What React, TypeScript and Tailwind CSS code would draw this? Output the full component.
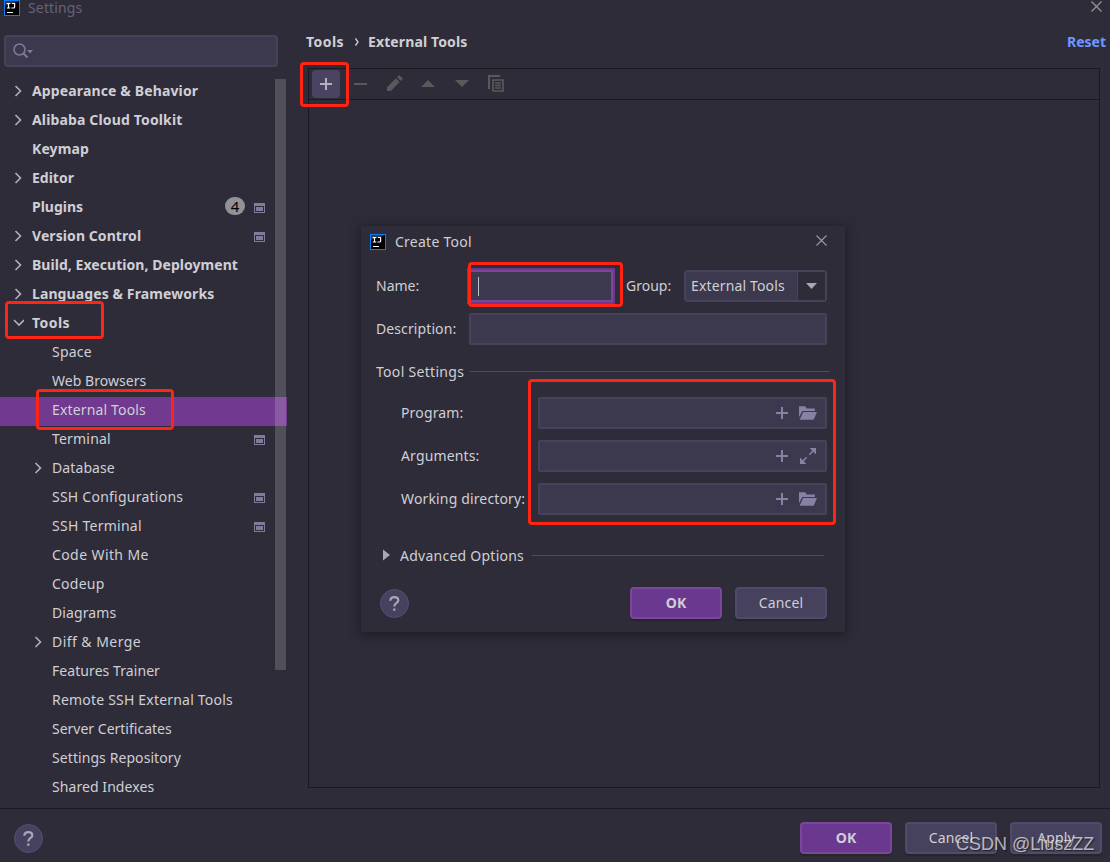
import clsx from 'clsx';
import type { ReactNode } from 'react';

type TreeItem = {
  label: string;
  depth: 0 | 1;
  arrow?: 'right' | 'down';
  badge?: number;
  project?: boolean;
  selected?: boolean;
  tracking?: string;
};

const items: TreeItem[] = [
  { label: 'Appearance & Behavior', depth: 0, arrow: 'right', tracking: 'tracking-[0.14px]' },
  { label: 'Alibaba Cloud Toolkit', depth: 0, arrow: 'right', tracking: 'tracking-[0.15px]' },
  { label: 'Keymap', depth: 0, tracking: 'tracking-[0.1px]' },
  { label: 'Editor', depth: 0, arrow: 'right' },
  { label: 'Plugins', depth: 0, badge: 4, project: true },
  { label: 'Version Control', depth: 0, arrow: 'right', project: true, tracking: 'tracking-[0.08px]' },
  { label: 'Build, Execution, Deployment', depth: 0, arrow: 'right', tracking: 'tracking-[0.05px]' },
  { label: 'Languages & Frameworks', depth: 0, arrow: 'right', tracking: 'tracking-[0.1px]' },
  { label: 'Tools', depth: 0, arrow: 'down', tracking: 'tracking-[0.45px]' },
  { label: 'Space', depth: 1, tracking: 'tracking-[0.2px]' },
  { label: 'Web Browsers', depth: 1, tracking: 'tracking-[0.05px]' },
  { label: 'External Tools', depth: 1, selected: true, tracking: 'tracking-[0.16px]' },
  { label: 'Terminal', depth: 1, project: true, tracking: 'tracking-[0.2px]' },
  { label: 'Database', depth: 1, arrow: 'right', tracking: 'tracking-[0.1px]' },
  { label: 'SSH Configurations', depth: 1, project: true, tracking: 'tracking-[0.24px]' },
  { label: 'SSH Terminal', depth: 1, project: true, tracking: 'tracking-[0.26px]' },
  { label: 'Code With Me', depth: 1, tracking: 'tracking-[0.4px]' },
  { label: 'Codeup', depth: 1, tracking: 'tracking-[0.25px]' },
  { label: 'Diagrams', depth: 1, tracking: 'tracking-[0.1px]' },
  { label: 'Diff & Merge', depth: 1, arrow: 'right', tracking: 'tracking-[0.45px]' },
  { label: 'Features Trainer', depth: 1, tracking: 'tracking-[0.07px]' },
  { label: 'Remote SSH External Tools', depth: 1, tracking: 'tracking-[0.2px]' },
  { label: 'Server Certificates', depth: 1 },
  { label: 'Settings Repository', depth: 1, tracking: 'tracking-[0.08px]' },
  { label: 'Shared Indexes', depth: 1, tracking: 'tracking-[0.07px]' },
];

/* ---------- Icons ---------- */
function AppIcon() {
  return (
    <svg className="w-4 h-4 shrink-0" viewBox="0 0 16 16">
      <rect x="0.5" y="0.5" width="15" height="15" fill="#000" stroke="#087cfa" />
      <path d="M1 1h14L1 6z" fill="#3a3a3c" />
      <path d="M2.700 3.500h3.600M2.700 8h3.600M4.500 3.500V8M8 3.500h2.600V7q0 1-1 1H7.500" fill="none" stroke="#fff" strokeWidth="1.200" />
      <path d="M3 12.500h6" stroke="#fff" />
    </svg>
  );
}

function CloseIcon() {
  return (
    <svg className="w-[11px] h-[11px]" viewBox="0 0 11 11">
      <path d="M.5.5l10 10M10.500.5l-10 10" stroke="#9b9a9f" strokeWidth="1.1" />
    </svg>
  );
}

function TreeArrow({ dir }: { dir?: 'right' | 'down' }) {
  return (
    <svg className="w-3 h-3 shrink-0" viewBox="0 0 12 12" fill="none" stroke="#b3b2b8" strokeWidth="1.6">
      {dir === 'right' && <path d="M3.500 1l5 5-5 5" />}
      {dir === 'down' && <path d="M2 3l5 5 5-5" />}
    </svg>
  );
}

function ProjectIcon() {
  return (
    <svg className="block w-[11px] h-[10px]" viewBox="0 0 11 10">
      <path d="M0 0h11v10H0zM1 3v6h9V3z" fill="#807a9b" fillRule="evenodd" />
      <rect x="2" y="4" width="7" height="4" fill="#807a9b" />
    </svg>
  );
}

function PlusIcon() {
  return (
    <svg className="w-3 h-3" viewBox="0 0 12 12">
      <path d="M5 0h2v5h5v2H7v5H5V7H0V5h5z" fill="currentColor" />
    </svg>
  );
}

function FolderIcon() {
  return (
    <svg className="w-[19px] h-[14px]" viewBox="0 0 19 14">
      <path d="M0 0h6.500l1.500 2.300h8.700V5H3.500L0 11.500z" fill="#8781a3" />
      <path d="M4.300 6H19l-3.500 8H.7z" fill="#8781a3" />
    </svg>
  );
}

function ExpandIcon() {
  return (
    <svg className="w-4 h-4" viewBox="0 0 16 16" fill="#8781a3" stroke="#8781a3">
      <path d="M9.500 0H16v6.500z" stroke="none" />
      <path d="M0 9.500V16h6.500z" stroke="none" />
      <path d="M13.500 2.500L9.300 6.700M2.500 13.500l4.200-4.200" strokeWidth="1.600" />
    </svg>
  );
}

/* ---------- Controls ---------- */
function HelpButton() {
  return (
    <button className="flex w-[29px] h-[29px] items-center justify-center rounded-full border border-[#544f73] bg-[#46415e]">
      <svg className="w-[11px] h-[15px]" viewBox="0 0 11 15" fill="none" stroke="#aaa7b8" strokeWidth="2.200">
        <path d="M1.300 4.800Q1.300 1.200 5.300 1.200T9.300 4.400C9.300 7 5.300 7 5.300 10.500" />
        <path d="M5.300 12.500v2.300" />
      </svg>
    </button>
  );
}

function Button({ children, primary }: { children: ReactNode; primary?: boolean }) {
  return (
    <button
      className={clsx(
        'w-[92px] h-8 rounded border-2 text-[14px] shadow-[0_2px_1px_#26252c]',
        primary ? 'border-[#7a479a] bg-[#6b388f] font-bold' : 'border-[#4f4b6b] bg-[#46415c] tracking-[0.15px]',
      )}
    >
      {children}
    </button>
  );
}

function PathField({ label, icon }: { label: string; icon: ReactNode }) {
  return (
    <div className="flex h-8 items-center">
      <span className="w-[137px] whitespace-nowrap pb-px">{label}</span>
      <div className="flex h-8 w-[289px] items-center justify-end gap-[11px] rounded-xs border-2 border-[#454259] bg-[#3c384d] pr-[7px] text-[#8781a3]">
        <PlusIcon />
        <span className="flex w-[19px] justify-center pr-px">{icon}</span>
      </div>
    </div>
  );
}

function Mark({ className }: { className: string }) {
  return <div className={clsx('pointer-events-none absolute rounded border-3 border-[#ff2414]', className)} />;
}

/* ---------- Sidebar ---------- */
function TreeRow({ item }: { item: TreeItem }) {
  return (
    <div
      className={clsx(
        'flex h-[29px] items-center pb-1 pr-[22px]',
        item.depth === 0 ? 'pl-3 font-bold' : 'pl-8',
        item.selected && 'bg-[#71398f]',
      )}
    >
      <TreeArrow dir={item.arrow} />
      <span className={clsx('ml-2 flex-1 whitespace-nowrap', item.tracking)}>{item.label}</span>
      {item.badge && (
        <span className="mb-[2px] mr-[9px] flex h-[18px] w-5 items-center justify-center rounded-full bg-[#919197] text-[15px] font-normal text-black">
          {item.badge}
        </span>
      )}
      {item.project && <span className="pt-[2px]"><ProjectIcon /></span>}
    </div>
  );
}

function Sidebar() {
  return (
    <aside className="relative w-[287px] shrink-0">
      <div className="flex h-4 items-center gap-2 pl-1 text-[#676279]">
        <AppIcon />
        <span className="text-[14px] leading-4 tracking-[0.15px]">Settings</span>
      </div>
      <div className="ml-1 mt-[19px] flex h-8 w-[274px] items-center rounded border-2 border-[#454259] bg-[#3c384d] pl-[7px]">
        <svg className="h-4 w-5" viewBox="0 0 20 16" fill="none" stroke="#807a9b" strokeWidth="1.500">
          <circle cx="6.500" cy="6.500" r="5.500" />
          <path d="M10.500 10.500l4 4" strokeWidth="2" />
          <path d="M14 7h6l-3 3.500z" fill="#807a9b" stroke="none" />
        </svg>
      </div>
      <div className="mt-[11px]">
        {items.map((item) => (
          <TreeRow key={item.label} item={item} />
        ))}
      </div>
      <div className="absolute left-[275px] top-[79px] h-[591px] w-[11px] bg-white/17" />
    </aside>
  );
}

/* ---------- Create Tool dialog ---------- */
function CreateToolDialog() {
  return (
    <div className="absolute left-[361px] top-[226px] h-[406px] w-[484px] bg-[#2e2c39] tracking-[0.15px] shadow-[0_2px_9px_2px_#201f27]">
      <div className="flex h-[32px] items-center pl-[9px] pr-[18px]">
        <AppIcon />
        <span className="ml-[9px] flex-1 pb-px tracking-[0.25px]">Create Tool</span>
        <span className="pb-1"><CloseIcon /></span>
      </div>

      <div className="mt-3 flex h-8 items-center pl-[15px]">
        <span className="w-[93px] pb-px tracking-normal">Name:</span>
        <div className="flex h-8 w-[144px] items-center border-2 border-[#80459b] bg-[#3c384d] pl-[7px] outline-2 outline-[#6b388b]">
          <span className="h-[19px] w-px bg-[#c0bfc5]" />
        </div>
        <span className="ml-[13px] w-[58px] pb-px tracking-normal">Group:</span>
        <div className="flex h-8 w-[143px] items-center rounded border-2 border-[#454259] bg-[#3c384d]">
          <span className="w-[111px] whitespace-nowrap pb-px pl-[5px]">External Tools</span>
          <span className="flex h-full flex-1 items-center justify-center border-l border-[#454259] bg-[#2e2c39]">
            <svg className="h-[6px] w-[11px]" viewBox="0 0 11 6">
              <path d="M0 0h11L5.500 6z" fill="#a9a6b8" />
            </svg>
          </span>
        </div>
      </div>

      <div className="mt-[11px] flex h-8 items-center pl-[15px]">
        <span className="w-[93px] pb-px tracking-[0.1px]">Description:</span>
        <div className="h-8 w-[358px] rounded-xs border-2 border-[#454259] bg-[#3c384d]" />
      </div>

      <div className="mt-4 flex h-5 items-center pl-[15px] pr-[15px]">
        <span className="w-[94px] whitespace-nowrap pt-[2px] tracking-[0.3px]">Tool Settings</span>
        <span className="h-px flex-1 bg-[#4f4b60]" />
      </div>

      <div className="mt-4 flex flex-col gap-[11px] pl-10">
        <PathField label="Program:" icon={<FolderIcon />} />
        <PathField label="Arguments:" icon={<ExpandIcon />} />
        <PathField label="Working directory:" icon={<FolderIcon />} />
      </div>

      <div className="mt-[30px] flex h-5 items-center pl-[22px] pr-[21px]">
        <svg className="h-3 w-[7px]" viewBox="0 0 7 12">
          <path d="M0 0.500l7 5.500-7 5.500z" fill="#a9a6b8" />
        </svg>
        <span className="ml-[10px] w-[132px] whitespace-nowrap pt-[2px] tracking-[0.25px]">Advanced Options</span>
        <span className="h-px flex-1 bg-[#4f4b60]" />
      </div>

      <div className="mt-[22px] flex h-8 items-center pl-[19px] pr-[18px]">
        <HelpButton />
        <div className="ml-auto flex gap-[13px]">
          <Button primary>OK</Button>
          <Button>Cancel</Button>
        </div>
      </div>
    </div>
  );
}

/* ---------- Main Page ---------- */
export default function App() {
  return (
    <div className="relative flex h-[862px] w-[1110px] flex-col overflow-hidden bg-[#2e2c39] font-['Noto_Sans',sans-serif] text-[14px] leading-5 text-[#d0cfd5]">
      <div className="flex h-[808px]">
        <Sidebar />
        <main className="flex-1 pl-[19px]">
          <div className="flex h-4 justify-end pr-2 pt-px">
            <CloseIcon />
          </div>
          <div className="mt-4 flex h-5 items-center pr-1 font-bold">
            <span className="w-[38px] tracking-[0.45px]">Tools</span>
            <svg className="ml-[11px] mr-[9px] h-2 w-1" viewBox="0 0 4 8" fill="none" stroke="#d0cfd5" strokeWidth="1.300">
              <path d="M.5.500L3 4 .5 7.500" />
            </svg>
            <span className="flex-1 tracking-[0.12px]">External Tools</span>
            <span className="text-[#6f97ff]">Reset</span>
          </div>
          <div className="ml-[2px] mt-4 h-[720px] w-[792px] border border-[#1c1923]">
            <div className="flex h-[31px] items-center border-b border-[#1c1923] pl-[3px] text-[#59595b]">
              <span className="flex h-7 w-7 items-center justify-center rounded bg-[#4a4361] text-[#b4b1c2]">
                <PlusIcon />
              </span>
              <span className="ml-[14px] h-[2px] w-[13px] bg-current" />
              <svg className="mb-[2px] ml-5 h-4 w-4" viewBox="0 0 17 17" fill="currentColor">
                <path d="M0 13L9.500 3.500l4 4L4 17H0zM10.700 2.300L13 0l4 4-2.300 2.300z" />
              </svg>
              <svg className="mb-[2px] ml-[18px] h-[7px] w-[14px]" viewBox="0 0 14 7" fill="currentColor">
                <path d="M0 7l7-7 7 7z" />
              </svg>
              <svg className="mb-[2px] ml-5 h-[7px] w-[14px]" viewBox="0 0 14 7" fill="currentColor">
                <path d="M0 0l7 7 7-7z" />
              </svg>
              <svg className="mb-[2px] ml-[19px] h-[17px] w-4" viewBox="0 0 16 17" fill="none" stroke="currentColor" strokeWidth="2">
                <path d="M1 14V1h11" />
                <path d="M5 5h10v11H5zM7 8h6M7 10.500h6M7 13h6" strokeWidth="1.700" />
              </svg>
            </div>
          </div>
        </main>
      </div>

      <footer className="flex flex-1 items-start border-t border-[#1c1923] pl-[14px] pr-2 pt-[13px]">
        <div className="mt-[2px] flex">
          <HelpButton />
        </div>
        <div className="ml-auto flex gap-[13px]">
          <Button primary>OK</Button>
          <Button>Cancel</Button>
          <Button>Apply</Button>
        </div>
      </footer>

      <CreateToolDialog />

      <Mark className="left-[300px] top-[62px] h-[45px] w-[49px]" />
      <Mark className="left-[5px] top-[301px] h-[38px] w-[99px]" />
      <Mark className="left-[36px] top-[389px] h-[41px] w-[138px]" />
      <Mark className="left-[468px] top-[262px] h-[45px] w-[155px]" />
      <Mark className="left-[528px] top-[379px] h-[146px] w-[308px]" />

      <span className="absolute left-[956px] top-[834px] whitespace-nowrap font-['Liberation_Sans',sans-serif] text-[18px] text-white/65 [text-shadow:1px_1px_1px_#0008]">
        CSDN @LiuszZZ
      </span>
    </div>
  );
}
